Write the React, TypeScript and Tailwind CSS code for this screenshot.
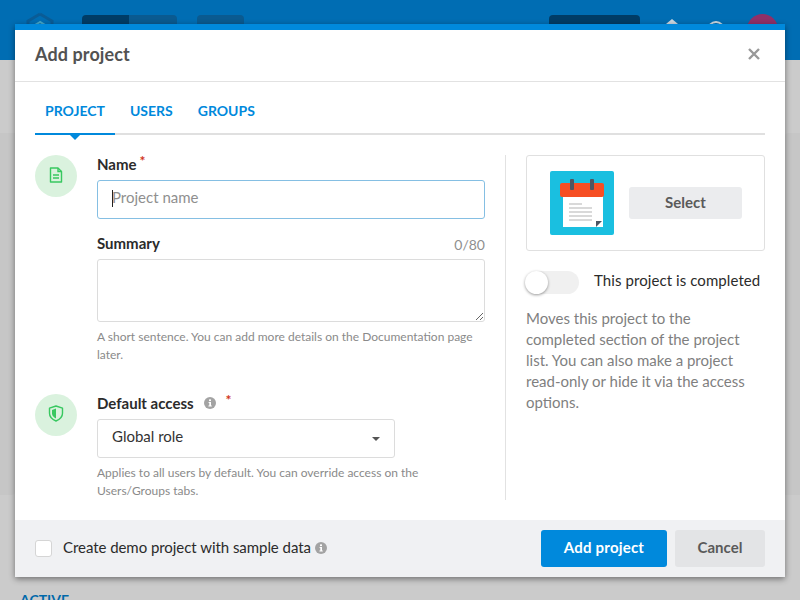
import { useState } from "react";

const FONT = "font-['Lato','Liberation_Sans',sans-serif]";

function InfoDot() {
  return (
    <svg className="w-3 h-3 shrink-0" viewBox="0 0 12 12">
      <circle cx="6" cy="6" r="6" fill="#a3a3a3" />
      <rect x="5" y="2.4" width="2" height="1.7" fill="#fff" />
      <path d="M4.6 5h2.4v3.6h.8v.9H4.4v-.9h.9V5.9h-.7z" fill="#fff" />
    </svg>
  );
}

function StepIcon({ children }: { children: React.ReactNode }) {
  return (
    <div className="w-[42px] h-[42px] rounded-full bg-[#daf2de] flex items-center justify-center shrink-0">
      {children}
    </div>
  );
}

function CalendarArt() {
  return (
    <svg width="64" height="64" viewBox="0 0 64 64" className="shrink-0">
      <rect width="64" height="64" rx="2" fill="#1abfe0" />
      <path d="M13 24h40v32H13z" fill="#fff" />
      <path d="M46 56l6-6h-6z" fill="#4b5563" />
      <rect x="10" y="12" width="44" height="14" rx="2" fill="#f64e23" />
      <rect x="20" y="8" width="4" height="11" rx="1" fill="#4e5560" />
      <rect x="40" y="8" width="4" height="11" rx="1" fill="#4e5560" />
      <rect x="19" y="32" width="13" height="2" fill="#d9d9d9" />
      <rect x="19" y="36" width="23" height="2" fill="#d9d9d9" />
      <rect x="19" y="40" width="23" height="2" fill="#d9d9d9" />
      <rect x="19" y="44" width="23" height="2" fill="#d9d9d9" />
      <rect x="19" y="48" width="23" height="2" fill="#d9d9d9" />
    </svg>
  );
}

export default function App() {
  const [name, setName] = useState("");

  return (
    <div className={`relative w-[800px] h-[600px] overflow-hidden bg-[#cbcbcb] ${FONT}`}>
      {/* Dimmed page behind the dialog */}
      <div className="h-[60px] bg-[#006db3] flex items-start">
        <svg width="38" height="20" viewBox="0 0 38 20" className="ml-[19px] mt-[12px]">
          <path d="M21 2l12 7v12M21 2L9 9v12" fill="none" stroke="#0a5c96" strokeWidth="3" />
          <path d="M21 10L11 16h20z" fill="none" stroke="#45a7c9" strokeWidth="2" />
        </svg>
        <div className="ml-[25px] mt-[15px] w-[95px] h-[12px] rounded-t flex overflow-hidden">
          <div className="w-[47px] bg-[#003c66]" />
          <div className="flex-1 bg-[#0a5a90]" />
        </div>
        <div className="ml-[20px] mt-[15px] w-[47px] h-[12px] rounded-t bg-[#0a5a90]" />
        <div className="ml-[305px] mt-[15px] w-[91px] h-[12px] rounded-t bg-[#003c66]" />
        <svg width="16" height="8" viewBox="0 0 16 8" className="ml-[24px] mt-[19px]">
          <path d="M8 0l6 5v3H2V5z" fill="#c9d6e0" />
        </svg>
        <svg width="20" height="10" viewBox="0 0 20 10" className="ml-[26px] mt-[20px]">
          <circle cx="10" cy="10" r="8" fill="none" stroke="#c9d6e0" strokeWidth="2" />
        </svg>
        <div className="ml-[21px] mt-[14px] w-[31px] h-[31px] rounded-full bg-[#8f3068]" />
      </div>
      <div className="absolute left-0 top-[133px] w-[15px] h-[362px] bg-[#c6c6c6] rounded-br" />
      <div className="absolute right-0 top-[133px] w-[15px] h-[362px] bg-[#c6c6c6] rounded-tl" />
      <div className="absolute left-[20px] top-[591px] text-[14px] leading-[17px] font-bold text-[#0069aa]">ACTIVE</div>

      {/* Dialog */}
      <div className="absolute left-[15px] top-[24px] w-[770px] h-[553px] flex flex-col bg-white border-t-[6px] border-[#0089dc] shadow-[0_2px_6px_rgba(0,0,0,0.45)]">
        <div className="h-[52px] shrink-0 flex items-center justify-between pl-[20px] pr-[24px] pb-[4px] border-b border-[#e2e2e2]">
          <h1 className="text-[18px] tracking-[0.1px] font-bold text-[#525252] leading-none">Add project</h1>
          <svg width="14" height="14" viewBox="0 0 14 14">
            <path d="M2 2l10 10M12 2L2 12" stroke="#999" strokeWidth="2.4" fill="none" />
          </svg>
        </div>

        <div className="mx-[20px] h-[53px] shrink-0 flex items-stretch border-b-2 border-[#e0e0e0]">
          {["PROJECT", "USERS", "GROUPS"].map((tab, i) => (
            <div
              key={tab}
              className={`relative flex items-center pt-[5px] text-[14px] font-bold text-[#0089dc] ${i === 0 ? "pl-[10px] pr-[10px] mr-[15px]" : "mr-[25px]"}`}
            >
              {tab}
              {i === 0 && (
                <>
                  <div className="absolute left-0 right-0 -bottom-[2px] h-[2px] bg-[#0089dc]" />
                  <div className="absolute left-1/2 -translate-x-1/2 -bottom-[7px] border-x-[5px] border-x-transparent border-t-[5px] border-t-[#0089dc]" />
                </>
              )}
            </div>
          ))}
        </div>

        <div className="flex-1 flex mx-[20px] pt-[20px]">
          {/* Left column */}
          <div className="w-[450px] flex flex-col">
            <div className="flex gap-[20px]">
              <StepIcon>
                <svg width="14" height="16" viewBox="0 0 14 16" fill="none" stroke="#38c860" strokeWidth="1.4" className="-mt-[3px]">
                  <path d="M1.5 1h7.5l3.5 3.5V15h-11z" strokeLinejoin="round" />
                  <path d="M9 1v3.5h3.5M4 8h6M4 11h6" />
                </svg>
              </StepIcon>
              <div className="w-[388px]">
                <div className="h-[25px] flex items-start text-[15px] font-bold text-[#2b2b2b]">
                  <span className="leading-[20px] -mt-[1px]">Name</span>
                  <span className="ml-[3px] -mt-[2px] text-[14px] leading-[16px] text-[#d0341c]">*</span>
                </div>
                <div className="relative">
                  <input
                    value={name}
                    onChange={(e) => setName(e.target.value)}
                    placeholder="Project name"
                    className="w-full h-[39px] px-[14px] pb-[5px] rounded-[3px] border border-[#85bfe3] text-[15px] text-[#333] placeholder:text-[#8f8f8f] outline-none"
                  />
                  <div className="absolute left-[15px] top-[10px] w-px h-[17px] bg-[#222]" />
                </div>
                <div className="mt-[15px] h-[25px] flex items-start justify-between">
                  <span className="text-[15px] leading-[20px] -mt-[1px] font-bold text-[#2b2b2b]">Summary</span>
                  <span className="text-[14px] leading-[20px] mt-[1px] text-[#8f8f8f]">0/80</span>
                </div>
                <textarea className="block w-full h-[63px] rounded-[3px] border border-[#dcdcdc] resize-y outline-none" />
                <p className="mt-[6px] text-[12px] leading-[18px] text-[#8a8a8a]">
                  A short sentence. You can add more details on the Documentation page later.
                </p>
              </div>
            </div>

            <div className="flex gap-[20px] mt-[30px]">
              <StepIcon>
                <svg width="16" height="17" viewBox="0 0 16 17" className="-mt-[3px]">
                  <path d="M8 1l6.5 2.2v5c0 3.6-2.6 6.2-6.5 7.8-3.9-1.6-6.5-4.2-6.5-7.8v-5z" fill="none" stroke="#38c860" strokeWidth="1.4" strokeLinejoin="round" />
                  <path d="M8 3.5v10c-2.5-1.2-4-3-4-5.3V5z" fill="#38c860" />
                </svg>
              </StepIcon>
              <div className="w-[388px]">
                <div className="h-[25px] flex items-start text-[15px] font-bold text-[#2b2b2b]">
                  <span className="leading-[20px] -mt-[1px]">Default access</span>
                  <span className="ml-[10px] mt-[3px]"><InfoDot /></span>
                  <span className="ml-[10px] -mt-[2px] text-[14px] leading-[16px] text-[#d0341c]">*</span>
                </div>
                <div className="w-[298px] h-[39px] px-[14px] pb-[4px] flex items-center justify-between rounded-[3px] border border-[#dcdcdc] text-[15px] text-[#333]">
                  <span>Global role</span>
                  <span className="border-x-[4px] border-x-transparent border-t-[4px] border-t-[#555] mt-[4px]" />
                </div>
                <p className="mt-[6px] w-[340px] text-[12px] leading-[18px] text-[#8a8a8a]">
                  Applies to all users by default. You can override access on the Users/Groups tabs.
                </p>
              </div>
            </div>
          </div>

          {/* Divider */}
          <div className="w-px h-[345px] bg-[#e2e2e2] ml-[20px]" />

          {/* Right column */}
          <div className="w-[239px] ml-[20px]">
            <div className="h-[96px] flex items-center pl-[23px] rounded-[3px] border border-[#e0e0e0]">
              <CalendarArt />
              <div className="ml-[15px] w-[113px] h-[32px] pb-[1px] flex items-center justify-center rounded-[3px] bg-[#ebecee] text-[15px] font-bold text-[#5a5a5a]">
                Select
              </div>
            </div>
            <div className="mt-[20px] flex items-center">
              <div className="relative w-[53px] h-[23px] rounded-full bg-[#f0f0f0]">
                <div className="absolute -left-[1px] top-0 w-[23px] h-[23px] rounded-full bg-white shadow-[0_1px_3px_rgba(0,0,0,0.4)]" />
              </div>
              <span className="ml-[15px] -mt-[4px] text-[15px] tracking-[0.08px] text-[#2b2b2b] whitespace-nowrap">This project is completed</span>
            </div>
            <p className="mt-[14px] w-[225px] text-[15px] leading-[21px] text-[#7f7f7f]">
              Moves this project to the completed section of the project list. You can also make a project read-only or hide it via the access options.
            </p>
          </div>
        </div>

        {/* Footer */}
        <div className="h-[57px] shrink-0 flex items-center justify-between px-[20px] bg-[#f0f1f3]">
          <div className="flex items-center">
            <div className="w-[17px] h-[17px] rounded-[3px] border border-[#d5d5d5] bg-white" />
            <span className="ml-[11px] -mt-[2px] text-[15px] tracking-[-0.05px] text-[#2b2b2b]">Create demo project with sample data</span>
            <span className="ml-[4px] -mt-[1px]"><InfoDot /></span>
          </div>
          <div className="flex gap-[8px]">
            <div className="w-[126px] h-[37px] pb-[2px] flex items-center justify-center rounded-[3px] bg-[#0089dc] text-[15px] tracking-[0.2px] font-bold text-white">
              Add project
            </div>
            <div className="w-[90px] h-[37px] pb-[2px] flex items-center justify-center rounded-[3px] bg-[#e3e4e6] text-[15px] font-bold text-[#5a5a5a]">
              Cancel
            </div>
          </div>
        </div>
      </div>
    </div>
  );
}
